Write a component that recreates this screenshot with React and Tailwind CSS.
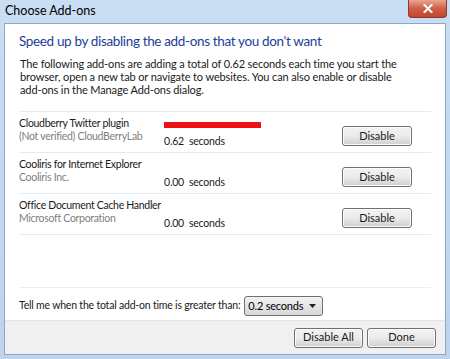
import { useState } from 'react';

const addons = [
  { name: 'Cloudberry Twitter plugin', publisher: '(Not verified) CloudBerryLab', time: '0.62', bar: 97 },
  { name: 'Cooliris for Internet Explorer', publisher: 'Cooliris Inc.', time: '0.00', bar: 0 },
  { name: 'Office Document Cache Handler', publisher: 'Microsoft Corporation', time: '0.00', bar: 0 },
];

function WinButton({ children, className = '' }) {
  return (
    <button
      className={`flex items-center justify-center rounded-[3px] border border-[#707070] bg-gradient-to-b from-[#f2f2f2] via-[#ebebeb] to-[#cfcfcf] text-[11px] text-[#1a1a1a] shadow-[inset_0_0_0_1px_#fcfcfc] ${className}`}
    >
      {children}
    </button>
  );
}

export default function App() {
  const [threshold, setThreshold] = useState('0.2 seconds');

  return (
    <div
      className="flex h-[359px] w-[450px] flex-col overflow-hidden bg-gradient-to-b from-[#c9def3] to-[#bcd4ee] px-[4px] pb-[4px] text-[#1a1a1a]"
      style={{ fontFamily: 'Lato, "Open Sans", sans-serif' }}
    >
      {/* title bar */}
      <div className="flex h-[23px] shrink-0 items-start justify-between">
        <div className="pt-[4px] pl-[1px] text-[12.5px] leading-[14px] text-black">Choose Add-ons</div>
        <div className="mr-[-1px] flex h-[18px] w-[39px] items-center justify-center rounded-b-[4px] border border-t-0 border-[#8a3b2c] bg-gradient-to-b from-[#e8a493] via-[#cf5f47] to-[#c2452c]">
          <svg width="10" height="9" viewBox="0 0 10 9">
            <path d="M1.5 1 L8.5 8 M8.5 1 L1.5 8" stroke="#fff" strokeWidth="2" strokeLinecap="square" />
          </svg>
        </div>
      </div>

      {/* client area */}
      <div className="flex flex-1 flex-col border border-[#8da7c6] bg-white">
        <div className="flex flex-1 flex-col px-[14px]">
          <div className="pt-[6px] text-[13.5px] leading-[22px] tracking-[-0.35px] text-[#1e3d99]">
            Speed up by disabling the add-ons that you don't want
          </div>
          <div className="mt-[5px] pl-[1px] text-[11px] leading-[13px] tracking-[-0.12px]">
            The following add-ons are adding a total of 0.62 seconds each time you start the
            <br />
            browser, open a new tab or navigate to websites. You can also enable or disable
            <br />
            add-ons in the Manage Add-ons dialog.
          </div>

          <div className="mt-[15px] border-t border-[#e3ecf6]">
            {addons.map((a) => (
              <div key={a.name} className="flex h-[41px] items-stretch border-b border-[#e3ecf6]">
                <div className="w-[145px] whitespace-nowrap pt-[5px] text-[10.5px] leading-[13px] tracking-[-0.3px]">
                  <div>{a.name}</div>
                  <div className="text-[#808080]">{a.publisher}</div>
                </div>
                <div className="flex w-[178px] flex-col pt-[10px] text-[10.5px] leading-[13px] tracking-[-0.2px]">
                  <div className="h-[6px] bg-[#ee1111]" style={{ width: a.bar }} />
                  <div className="mt-[7px]">{a.time}&nbsp; seconds</div>
                </div>
                <div className="flex items-center pt-[8px]">
                  <WinButton className="h-[20px] w-[70px]">Disable</WinButton>
                </div>
              </div>
            ))}
          </div>

          <div className="flex-1" />

          <div className="flex h-[33px] items-center border-t border-[#e8eff7] pt-[3px] text-[10.5px] tracking-[-0.2px]">
            <span>Tell me when the total add-on time is greater than:</span>
            <div className="relative ml-[4px] mt-[1px] h-[20px] w-[79px]">
              <select
                value={threshold}
                onChange={(e) => setThreshold(e.target.value)}
                className="h-full w-full appearance-none rounded-[3px] border border-[#707070] bg-gradient-to-b from-[#f2f2f2] to-[#d8d8d8] pl-[3px] text-[11px] tracking-[-0.2px] text-black outline-none"
              >
                <option>0.1 seconds</option>
                <option>0.2 seconds</option>
                <option>0.5 seconds</option>
                <option>1 second</option>
              </select>
              <svg className="pointer-events-none absolute right-[7px] top-[8px]" width="7" height="4" viewBox="0 0 7 4">
                <path d="M0 0 H7 L3.5 4 Z" fill="#222" />
              </svg>
            </div>
          </div>
        </div>

        {/* footer */}
        <div className="flex h-[34px] shrink-0 items-center justify-end gap-[4px] border-t border-[#e4e4e4] bg-[#f0f0f0] pr-[9px]">
          <WinButton className="h-[20px] w-[69px]">Disable All</WinButton>
          <WinButton className="h-[20px] w-[69px]">Done</WinButton>
        </div>
      </div>
    </div>
  );
}
